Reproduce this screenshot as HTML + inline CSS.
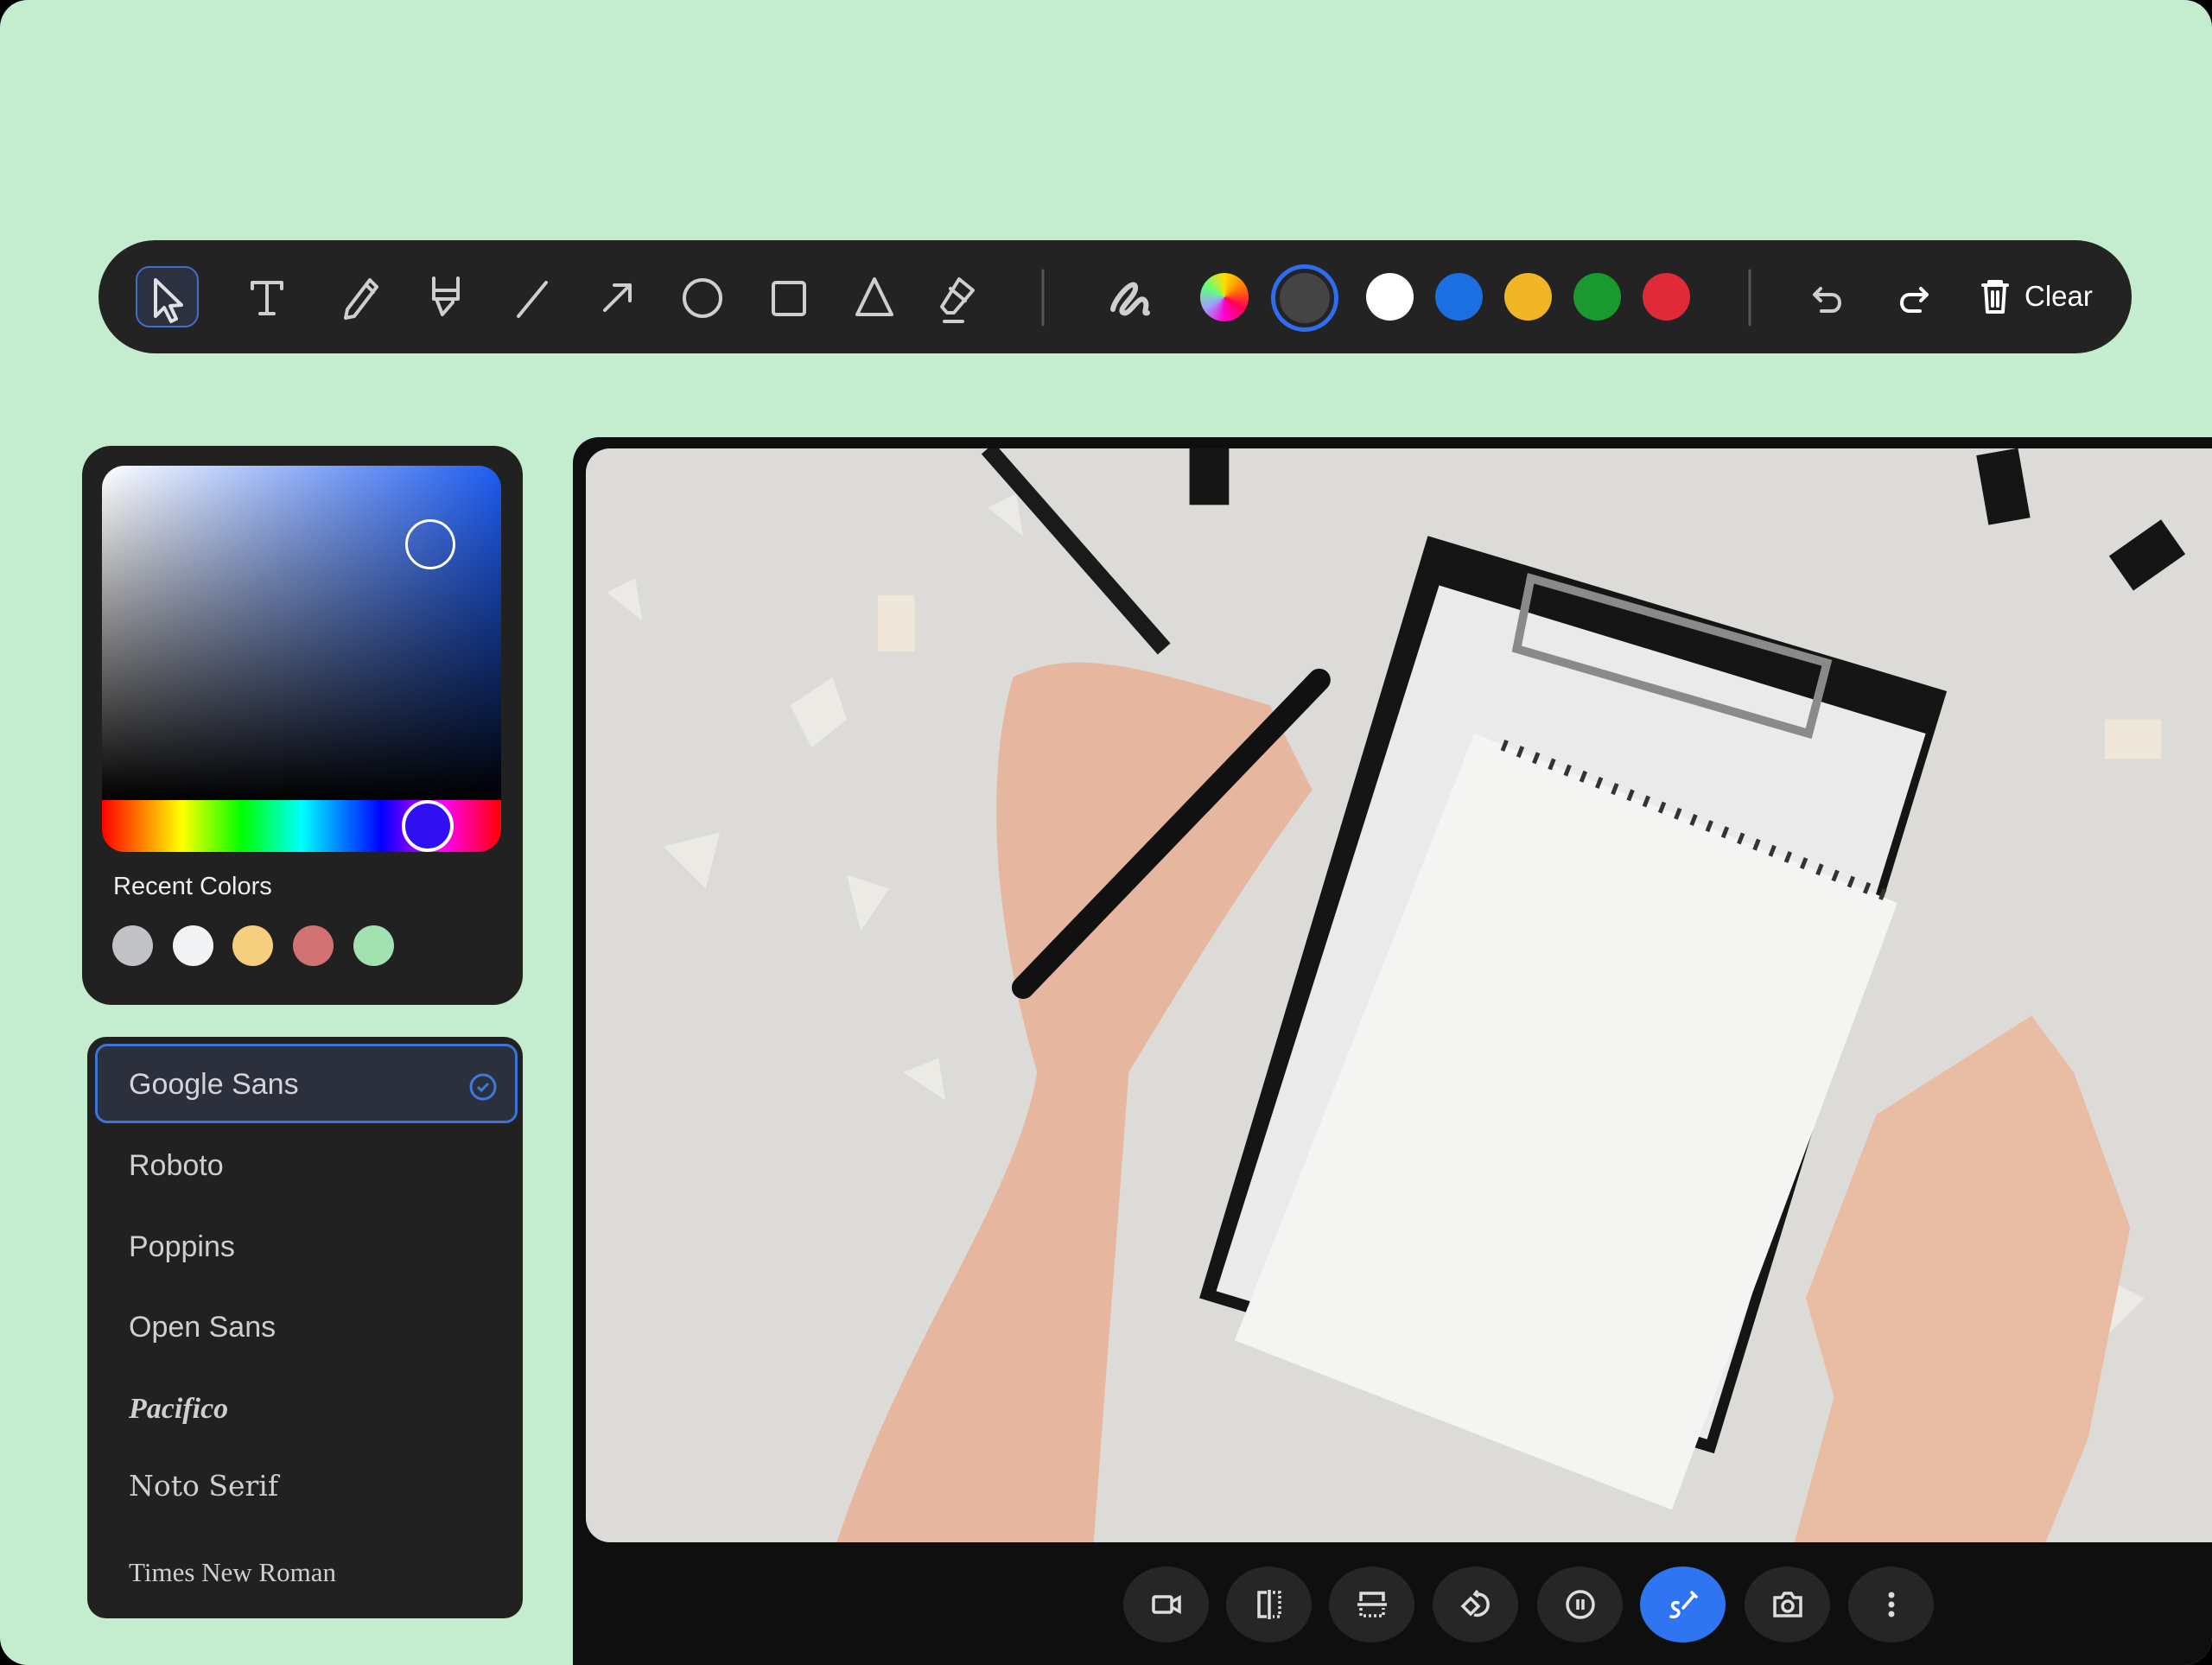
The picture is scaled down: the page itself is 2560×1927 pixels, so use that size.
<!DOCTYPE html>
<html><head><meta charset="utf-8"><style>
*{margin:0;padding:0;box-sizing:border-box}
body{width:2560px;height:1927px;background:#000;overflow:hidden;font-family:"Liberation Sans",sans-serif}
#bg{position:absolute;left:0;top:0;width:2560px;height:1927px;background:#c4edcf;border-radius:32px;overflow:hidden}
.abs{position:absolute}
#tb{left:114px;top:278px;width:2353px;height:131px;background:#232323;border-radius:66px}
.sw{position:absolute;border-radius:50%}
#cp{left:95px;top:516px;width:510px;height:647px;background:#212121;border-radius:34px}
#fp{left:101px;top:1200px;width:504px;height:673px;background:#212121;border-radius:22px}
.fi{position:absolute;left:48px;color:#cfcfcf;font-size:34px}
#fr{left:663px;top:506px;width:1960px;height:1480px;background:#0f0f0f;border-radius:30px}
.bb{position:absolute;top:1813px;width:99px;height:88px;border-radius:50%;background:#262626;display:flex;align-items:center;justify-content:center}
</style></head><body><div id="bg">

<div id="tb" class="abs">
 <div class="abs" style="left:43px;top:30px;width:73px;height:71px;border:2px solid #3f6fc8;background:#2b3140;border-radius:16px"></div>
 <svg class="abs" style="left:0;top:0" width="2353" height="131" viewBox="114 278 2353 131" fill="none" stroke="#cfcfcf" stroke-width="4" stroke-linecap="round" stroke-linejoin="round">
  <path d="M180 324 L180 366 L190 356 L198 372 L204 369 L197 354 L210 353 Z" stroke="#e0e0e0"/>
  <path d="M292 327 H326 M292 327 V334 M326 327 V334 M309 327 V363 M301 363 H317"/>
  <path d="M428 324 L436 332 L410 366 L400 368 L402 358 Z M424 330 L432 338"/>
  <path d="M502 322 V336 H530 V322 M502 336 V346 H530 V336 M505 346 L512 364 L524 350 V346"/>
  <path d="M632 327 L600 366"/>
  <path d="M700 359 L729 330 M711 330 H729 V348"/>
  <ellipse cx="813" cy="345" rx="21" ry="21"/>
  <rect x="895" y="327" width="36" height="37" rx="3"/>
  <path d="M1012 323 L992 364 H1032 Z"/>
  <path d="M1110 323 L1126 336 L1104 362 L1096 362 L1090 355 Z M1100 334 L1117 348 M1093 372 H1114"/>
  <path d="M1207 313 V376" stroke="#555" stroke-width="3"/>
  <path d="M1288 358 C1290 345 1312 322 1314 332 C1316 342 1292 358 1300 362 C1308 366 1320 336 1326 350 C1328 356 1322 364 1328 362" stroke-width="6"/>
  <path d="M2025 313 V376" stroke="#555" stroke-width="3"/>
  <path d="M2107 334 L2100 341 L2107 348 M2100 341 H2120 C2132 341 2132 360 2120 360 H2108"/>
  <path d="M2223 334 L2230 341 L2223 348 M2230 341 H2210 C2198 341 2198 360 2210 360 H2222" stroke="#fff"/>
  <path d="M2295 330 H2323 M2302 330 V326 H2316 V330 M2298 330 L2300 361 H2318 L2320 330 M2306 338 V354 M2312 338 V354" stroke="#fff"/>
 </svg>
 <div class="sw" style="left:1275px;top:38px;width:56px;height:56px;background:conic-gradient(#ffde00,#ff7a00,#ff0050,#ff00d0,#a0a0ff,#60ff80,#ffde00)"></div>
 <div class="sw" style="left:1357px;top:28px;width:78px;height:78px;border:5px solid #2f6df0;background:#232323"></div>
 <div class="sw" style="left:1367px;top:38px;width:58px;height:58px;background:#444"></div>
 <div class="sw" style="left:1467px;top:38px;width:55px;height:55px;background:#fff"></div>
 <div class="sw" style="left:1547px;top:38px;width:55px;height:55px;background:#1c6fe0"></div>
 <div class="sw" style="left:1627px;top:38px;width:55px;height:55px;background:#f1b625"></div>
 <div class="sw" style="left:1707px;top:38px;width:55px;height:55px;background:#1a9a2e"></div>
 <div class="sw" style="left:1787px;top:38px;width:55px;height:55px;background:#e02a38"></div>
 <div class="abs" style="left:2229px;top:46px;color:#fff;font-size:33px">Clear</div>
</div>

<div id="cp" class="abs">
 <div class="abs" style="left:23px;top:23px;width:462px;height:388px;border-radius:26px 26px 0 0;background:linear-gradient(to bottom,rgba(0,0,0,0),#000),linear-gradient(to right,#fff,#1e5cf2)"></div>
 <div class="abs" style="left:374px;top:85px;width:58px;height:58px;border:3px solid #fff;border-radius:50%"></div>
 <div class="abs" style="left:23px;top:410px;width:462px;height:60px;border-radius:0 0 26px 26px;background:linear-gradient(to right,#f00,#ff0 20%,#0f0 35%,#0ff 50%,#00f 70%,#f0f 85%,#f00)"></div>
 <div class="abs" style="left:370px;top:410px;width:60px;height:60px;border:4px solid #fff;border-radius:50%;background:#3010f0"></div>
 <div class="abs" style="left:36px;top:494px;color:#eee;font-size:29px">Recent Colors</div>
 <div class="sw" style="left:35px;top:555px;width:47px;height:47px;background:#c0c2c6"></div>
 <div class="sw" style="left:105px;top:555px;width:47px;height:47px;background:#f2f3f4"></div>
 <div class="sw" style="left:174px;top:555px;width:47px;height:47px;background:#f6cf7e"></div>
 <div class="sw" style="left:244px;top:555px;width:47px;height:47px;background:#d27272"></div>
 <div class="sw" style="left:314px;top:555px;width:47px;height:47px;background:#a3e1b0"></div>
</div>

<div id="fp" class="abs">
 <div class="abs" style="left:9px;top:8px;width:489px;height:92px;border:3px solid #3d74d8;background:#2b303c;border-radius:14px"></div>
 <div class="fi" style="top:36px;color:#d4d4d8">Google Sans</div>
 <svg class="abs" style="left:441px;top:41px" width="34" height="34" viewBox="0 0 34 34" fill="none" stroke="#3d7ae0" stroke-width="3"><circle cx="17" cy="17" r="14"/><path d="M11 17 L15 21 L23 13"/></svg>
 <div class="fi" style="top:130px">Roboto</div>
 <div class="fi" style="top:224px">Poppins</div>
 <div class="fi" style="top:317px">Open Sans</div>
 <div class="fi" style="top:412px;font-family:'Liberation Serif',serif;font-style:italic;font-weight:bold">Pacifico</div>
 <div class="fi" style="top:500px;font-family:'DejaVu Serif',serif;font-size:33px">Noto Serif</div>
 <div class="fi" style="top:602px;font-family:'Liberation Serif',serif;font-size:31px">Times New Roman</div>
</div>

<div id="fr" class="abs"></div>
<svg class="abs" style="left:678px;top:519px;border-radius:28px 0 0 28px" width="1882" height="1266" viewBox="415 318 1153 775" preserveAspectRatio="none">
 <rect x="415" y="318" width="1153" height="775" fill="#dcdbd7"/>
 <g fill="#ecebe6" opacity=".9"><path d="M560 500 l30 -20 l10 30 l-25 20z"/><path d="M470 600 l40 -10 l-10 40z"/><path d="M600 620 l30 10 l-20 30z"/><path d="M1480 900 l40 20 l-30 30z"/><path d="M700 360 l20 -10 l5 30z"/><path d="M430 420 l20 -10 l5 30z"/><path d="M640 760 l25 -10 l5 30z"/></g>
 <path d="M1012 380 L1380 490 L1215 1030 L850 920 Z" fill="#151515"/>
 <path d="M1020 415 L1365 520 L1210 1020 L862 915 Z" fill="#eaeaea"/>
 <path d="M1085 410 L1295 470 L1282 520 L1075 460 Z" fill="none" stroke="#8a8a8a" stroke-width="6"/>
 <path d="M1045 520 L1345 640 L1185 1070 L875 950 Z" fill="#f4f4f3"/>
 <path d="M1065 528 L1340 636" stroke="#333" stroke-width="8" stroke-dasharray="3 9"/>
 <path d="M718 480 C760 460 800 470 900 500 L930 560 C900 600 860 660 800 760 L775 1093 L593 1093 C640 950 720 850 735 760 C700 640 700 540 718 480 Z" fill="#e6b79e"/>
 <path d="M1330 790 L1440 720 L1470 760 L1510 870 L1480 1020 L1450 1093 L1272 1093 L1300 990 L1280 920 Z" fill="#e9bca4"/>
 <path d="M725 700 L935 482" stroke="#111" stroke-width="16" stroke-linecap="round"/>
 <path d="M700 318 L825 460" stroke="#1a1a1a" stroke-width="12"/>
 <g fill="#151515"><rect x="843" y="318" width="28" height="40"/><rect x="1405" y="320" width="30" height="50" transform="rotate(-10 1420 345)"/><rect x="1500" y="380" width="45" height="30" transform="rotate(-35 1520 395)"/></g>
 <g fill="#efe8da"><rect x="622" y="422" width="26" height="40"/><rect x="1492" y="510" width="40" height="28"/></g>
</svg>
<div class="bb" style="left:1300px"><svg width="40" height="40" viewBox="0 0 40 40" fill="none" stroke="#ddd" stroke-width="3.5"><rect x="5" y="11" width="21" height="18" rx="2"/><path d="M26 17 L35 12 V28 L26 23"/></svg></div>
<div class="bb" style="left:1419px"><svg width="40" height="40" viewBox="0 0 40 40" fill="none" stroke="#ddd" stroke-width="3.5"><path d="M17 6 H8 V34 H17 M20 3 V37"/><path d="M24 6 H32 V34 H24" stroke-dasharray="3 3"/></svg></div>
<div class="bb" style="left:1538px"><svg width="40" height="40" viewBox="0 0 40 40" fill="none" stroke="#ddd" stroke-width="3.5"><path d="M7 16 V7 H33 V16 M3 20 H37"/><path d="M7 24 V33 H33 V24" stroke-dasharray="3 3"/></svg></div>
<div class="bb" style="left:1658px"><svg width="40" height="40" viewBox="0 0 40 40" fill="none" stroke="#ddd" stroke-width="3.5"><path d="M5 22 L14 13 L23 22 L14 31 Z M22 8 C30 8 35 14 34 22 C33 29 25 34 18 32 M22 4 L19 8 L23 11"/></svg></div>
<div class="bb" style="left:1779px"><svg width="40" height="40" viewBox="0 0 40 40" fill="none" stroke="#ddd" stroke-width="3.5"><circle cx="20" cy="20" r="15"/><path d="M17 14 V26 M23 14 V26"/></svg></div>
<div class="bb" style="left:1898px;background:#2f74f0"><svg width="40" height="40" viewBox="0 0 40 40" fill="none" stroke="#fff" stroke-width="3.5" stroke-linecap="round"><path d="M14 18 C6 16 6 24 12 26 C18 28 14 36 6 34 M20 24 L32 10 M30 6 L35 11"/></svg></div>
<div class="bb" style="left:2019px"><svg width="40" height="40" viewBox="0 0 40 40" fill="none" stroke="#ddd" stroke-width="3.5"><path d="M5 12 H13 L16 7 H24 L27 12 H35 V33 H5 Z"/><circle cx="20" cy="22" r="6"/></svg></div>
<div class="bb" style="left:2139px"><svg width="40" height="40" viewBox="0 0 40 40" fill="#ddd"><circle cx="20" cy="9" r="3.5"/><circle cx="20" cy="20" r="3.5"/><circle cx="20" cy="31" r="3.5"/></svg></div>
</div></body></html>
